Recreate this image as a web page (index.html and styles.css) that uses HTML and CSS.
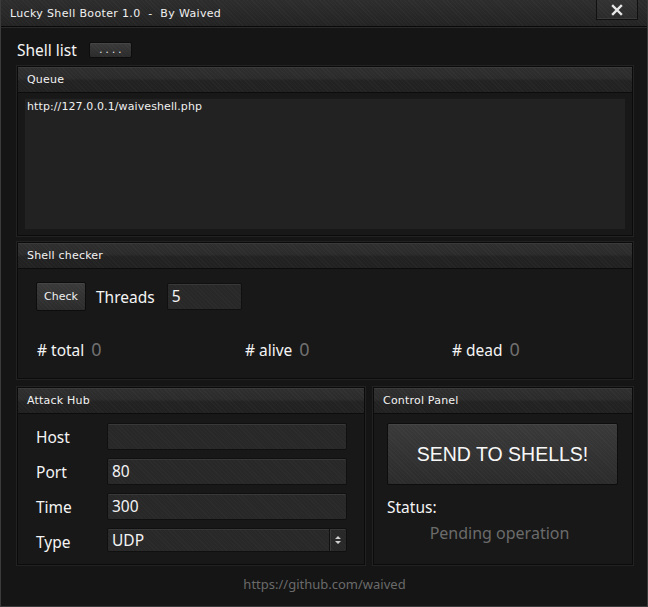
FILE: index.html
```html
<!DOCTYPE html>
<html>
<head>
<meta charset="utf-8">
<link rel="stylesheet" href="styles.css">
</head>
<body>
<div class="window">
  <div class="titlebar">
    <span class="title">Lucky Shell Booter 1.0&nbsp; - &nbsp;By Waived</span>
    <div class="close">
      <svg width="12" height="12" viewBox="0 0 12 12"><path d="M2 2 L10 10 M10 2 L2 10" stroke="#e8e8e8" stroke-width="2.4" stroke-linecap="square"/></svg>
    </div>
  </div>
  <div class="content">
    <div class="shell-row">
      <span class="big-label">Shell list</span>
      <button class="btn dots">. . . .</button>
    </div>

    <div class="panel queue">
      <div class="panel-head">Queue</div>
      <div class="panel-body queue-body">
        <div class="textarea">http://127.0.0.1/waiveshell.php</div>
      </div>
    </div>

    <div class="panel checker">
      <div class="panel-head">Shell checker</div>
      <div class="panel-body checker-body">
        <div class="check-row">
          <button class="btn check">Check</button>
          <span class="big-label threads">Threads</span>
          <div class="input threads-input">5</div>
        </div>
        <div class="stats">
          <div class="stat"><span class="big-label"># total</span><span class="num">0</span></div>
          <div class="stat"><span class="big-label"># alive</span><span class="num">0</span></div>
          <div class="stat"><span class="big-label"># dead</span><span class="num">0</span></div>
        </div>
      </div>
    </div>

    <div class="bottom-row">
      <div class="panel hub">
        <div class="panel-head">Attack Hub</div>
        <div class="panel-body hub-body">
          <span class="big-label">Host</span><div class="input"></div>
          <span class="big-label">Port</span><div class="input">80</div>
          <span class="big-label">Time</span><div class="input">300</div>
          <span class="big-label">Type</span>
          <div class="input select">
            <span class="sel-val">UDP</span>
            <span class="spin">
              <svg width="8" height="10" viewBox="0 0 8 10"><path d="M4 1 L7 4 L1 4 Z M4 9 L7 6 L1 6 Z" fill="#d0d0d0"/></svg>
            </span>
          </div>
        </div>
      </div>
      <div class="panel control">
        <div class="panel-head">Control Panel</div>
        <div class="panel-body control-body">
          <button class="btn send">SEND TO SHELLS!</button>
          <div class="big-label status">Status:</div>
          <div class="pending">Pending operation</div>
        </div>
      </div>
    </div>

    <div class="footer">https://github.com/waived</div>
  </div>
</div>
</body>
</html>
```

FILE: styles.css
```css
* { box-sizing: border-box; }
html, body { margin: 0; padding: 0; background: #141414; }
body { width: 648px; height: 607px; overflow: hidden; }

.window {
  width: 648px;
  height: 607px;
  display: flex;
  flex-direction: column;
  background: #151515;
  border: 1px solid #3b3b3b;
  border-top: none;
  font-family: "DejaVu Sans", Verdana, sans-serif;
  color: #f2f2f2;
}

.titlebar {
  height: 27px;
  flex: none;
  display: flex;
  justify-content: space-between;
  align-items: flex-start;
  background:
    repeating-linear-gradient(45deg, rgba(255,255,255,0.025) 0 1px, transparent 1px 3px),
    linear-gradient(#2d2d2d, #232323);
  border-bottom: 1px solid #090909;
  box-shadow: 0 1px 0 #2a2a2a;
}
.title {
  font-size: 11px;
  line-height: 27px;
  padding-left: 9px;
  color: #f0f0f0;
  letter-spacing: 0.35px;
}
.close {
  width: 42px;
  height: 20px;
  margin-right: 9px;
  display: flex;
  align-items: center;
  justify-content: center;
  background:
    repeating-linear-gradient(45deg, rgba(255,255,255,0.025) 0 1px, transparent 1px 3px),
    linear-gradient(#333, #2a2a2a);
  border: 1px solid #111;
  border-top: none;
  box-shadow: inset 0 -1px 0 #3a3a3a;
}

.content {
  flex: 1;
  display: flex;
  flex-direction: column;
  padding: 0 14px 0 15px;
}

.big-label {
  font-family: "Noto Sans", "Open Sans", sans-serif;
  font-size: 15.5px;
  color: #f4f4f4;
}

.shell-row {
  height: 39px;
  display: flex;
  align-items: center;
  padding-left: 1px;
  padding-top: 7px;
}
.btn {
  font-family: "DejaVu Sans", Verdana, sans-serif;
  color: #f0f0f0;
  background:
    repeating-linear-gradient(45deg, rgba(255,255,255,0.025) 0 1px, transparent 1px 3px),
    linear-gradient(#3a3a3a, #2b2b2b);
  border: 1px solid #0d0d0d;
  border-radius: 2px;
  box-shadow: inset 0 1px 0 #454545;
  padding: 0;
  cursor: pointer;
}
.dots {
  width: 43px;
  height: 16px;
  margin-left: 12px;
  font-size: 10px;
  line-height: 12px;
}

.panel {
  border: 1px solid #0b0b0b;
  background: #181818;
  box-shadow: 0 0 0 1px #222;
}
.panel-head {
  height: 26px;
  line-height: 25px;
  font-size: 11px;
  padding-left: 9px;
  color: #f2f2f2;
  letter-spacing: 0.2px;
  background:
    repeating-linear-gradient(45deg, rgba(255,255,255,0.022) 0 1px, transparent 1px 3px),
    linear-gradient(#2f2f2f 0%, #2b2b2b 45%, #222 55%, #212121 100%);
  border-bottom: 1px solid #0c0c0c;
  box-shadow: inset 0 1px 0 #3a3a3a;
}

.queue { height: 170px; margin-left: 1px; }
.queue-body { padding: 5px 7px 6px 7px; height: 142px; }
.textarea {
  height: 131px;
  background: #222;
  border-top: 1px solid #1a1a1a;
  font-size: 11px;
  padding: 1px 2px;
  line-height: 13px;
  color: #f0f0f0;
  letter-spacing: 0.1px;
}

.checker { height: 137px; margin-top: 6px; margin-left: 1px; }
.checker-body { padding: 13px 0 0 18px; }
.check-row { display: flex; align-items: center; height: 29px; }
.check {
  width: 50px;
  height: 29px;
  font-size: 11px;
}
.threads { margin-left: 10px; }
.input {
  height: 27px;
  background:
    repeating-linear-gradient(45deg, rgba(255,255,255,0.02) 0 1px, transparent 1px 3px),
    #282828;
  border: 1px solid #101010;
  border-radius: 2px;
  box-shadow: inset 0 1px 0 #383838;
  font-family: "Noto Sans", "Open Sans", sans-serif;
  font-size: 15.5px;
  line-height: 25px;
  padding-left: 4px;
  color: #f4f4f4;
}
.threads-input { width: 75px; height: 27px; margin-left: 12px; }

.stats {
  display: grid;
  grid-template-columns: 208px 207px auto;
  margin-top: 26px;
  padding-left: 1px;
}
.stat { display: flex; align-items: baseline; gap: 7px; }
.num {
  font-family: "Noto Sans", "Open Sans", sans-serif;
  font-size: 18px;
  color: #707070;
}

.bottom-row {
  display: flex;
  gap: 8px;
  margin-top: 8px;
  height: 178px;
  margin-left: 1px;
}
.hub { width: 350px; }
.control { flex: 1; }

.hub-body {
  display: grid;
  grid-template-columns: 71px 240px;
  grid-auto-rows: 27px;
  row-gap: 8px;
  padding: 9px 0 0 18px;
  align-items: center;
}
.select {
  height: 24px;
  display: flex;
  justify-content: space-between;
  line-height: 22px;
  align-self: start;
}
.spin {
  width: 17px;
  border-left: 1px solid #111;
  box-shadow: inset 1px 0 0 #3a3a3a;
  display: flex;
  align-items: center;
  justify-content: center;
}

.control-body { padding: 9px 14px 0 13px; }
.send {
  width: 231px;
  height: 62px;
  font-family: "Liberation Sans", Arial, sans-serif;
  font-size: 19.5px;
  color: #f8f8f8;
}
.status { margin-top: 11px; }
.pending {
  text-align: center;
  font-family: "Noto Sans", "Open Sans", sans-serif;
  font-size: 16px;
  color: #6b6b6b;
  margin-top: 4px;
  padding-right: 6px;
}

.footer {
  flex: 1;
  display: flex;
  align-items: center;
  justify-content: center;
  font-family: "Noto Sans", "Open Sans", sans-serif;
  font-size: 13px;
  color: #6a6a6a;
  padding-bottom: 4px;
}
```
